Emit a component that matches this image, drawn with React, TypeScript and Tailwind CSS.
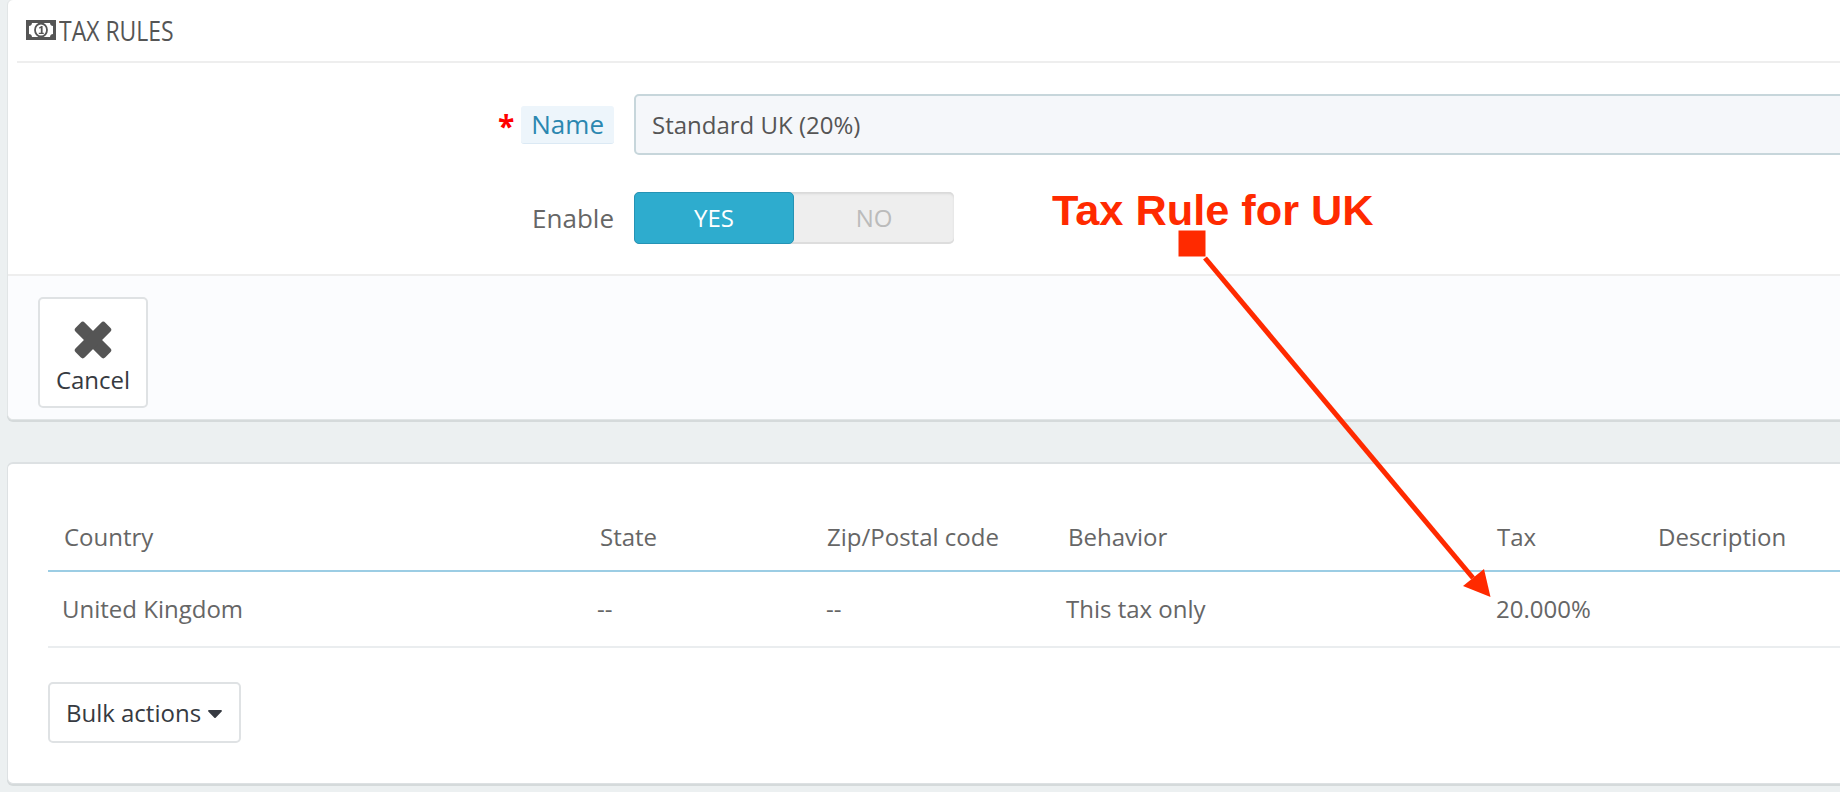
import { FaCaretDown } from "react-icons/fa";

const columns = [
  { label: "Country", cell: "United Kingdom", width: "w-[549px]", head: "pl-[16px]", body: "pl-[14px]" },
  { label: "State", cell: "--", width: "w-[229px]", head: "pl-[3px]", body: "pl-0" },
  { label: "Zip/Postal code", cell: "--", width: "w-[239px]", head: "pl-[1px]", body: "pl-0" },
  { label: "Behavior", cell: "This tax only", width: "w-[431px]", head: "pl-[3px]", body: "pl-[1px]" },
  { label: "Tax", cell: "20.000%", width: "w-[162px]", head: "pl-[1px]", body: "pl-0" },
  { label: "Description", cell: "", width: "w-[200px]", head: "pl-0", body: "pl-0" },
];

function MoneyIcon() {
  return (
    <svg width="30" height="20" viewBox="0 0 30 20" className="shrink-0">
      <path
        fillRule="evenodd"
        fill="#555555"
        d="M0 0h30v20H0z M6 3C6 5 4.500 6 3 6v8c1.500 0 3 1 3 3h18c0-2 1.500-3 3-3V6c-1.500 0-3-1-3-3z"
      />
      <ellipse cx="15" cy="10" rx="6" ry="6.500" fill="#ffffff" stroke="#555555" strokeWidth="1.800" />
      <path d="M13 7.500 15.300 6h1.300v6.800h1.200V14h-5v-1.200h2V8l-1.300 .7z" fill="#555555" />
    </svg>
  );
}

function CrossIcon() {
  return (
    <svg width="38" height="38" viewBox="0 0 38 38" className="shrink-0">
      <rect x="-2" y="12.500" width="42" height="13" rx="3" fill="#555555" transform="rotate(45 19 19)" />
      <rect x="-2" y="12.500" width="42" height="13" rx="3" fill="#555555" transform="rotate(-45 19 19)" />
    </svg>
  );
}

export default function App() {
  return (
    <div className="relative h-[792px] w-[1840px] overflow-hidden bg-[#ecf0f1] font-['Open_Sans',sans-serif] text-[#666666]">
      <section className="ml-[7px] mr-[-20px] mt-[-1px] rounded-[6px] border border-[#e1e5e6] bg-white shadow-[0_2px_0_#d5dadb]">
        <div className="mx-[9px] flex h-[63px] items-center gap-[3px] border-b-2 border-[#eeeeee] pl-[9px] pb-[1px] text-[#555555]">
          <MoneyIcon />
          <h2 className="origin-left scale-x-[0.82] text-[28px] leading-none whitespace-nowrap">TAX RULES</h2>
        </div>

        <div className="flex flex-col gap-[37px] pt-[31px] pb-[30px]">
          <div className="flex items-center">
            <div className="flex w-[606px] shrink-0 items-center justify-end gap-[7px]">
              <span className="pt-[3px] text-[30px] leading-none font-bold text-[#ff0000]">*</span>
              <label className="rounded-[3px] border-b border-[#dbe9f4] bg-[#edf5fb] px-[10px] py-[2px] text-[26px] leading-[33px] text-[#2b87b0]">
                Name
              </label>
            </div>
            <div className="ml-[20px] flex h-[61px] w-[1300px] shrink-0 items-center rounded-[5px] border-2 border-[#c7d6db] bg-[#f5f7fa] pl-[16px] text-[24px] text-[#555555]">
              Standard UK (20%)
            </div>
          </div>

          <div className="flex items-center">
            <label className="w-[606px] shrink-0 text-right text-[26px] text-[#666666]">Enable</label>
            <div className="ml-[20px] flex h-[52px] w-[320px] rounded-[5px] bg-[#eeeeee] shadow-[inset_0_2px_2px_#d8d8d8,inset_0_-2px_0_#dddddd]">
              <div className="flex h-full w-[160px] items-center justify-center rounded-[5px] border border-[#2593b5] bg-[#2eacce] text-[24px] text-white">
                YES
              </div>
              <div className="flex h-full w-[160px] items-center justify-center text-[24px] text-[#bbbbbb]">
                NO
              </div>
            </div>
          </div>
        </div>

        <div className="flex h-[145px] items-start rounded-b-[6px] border-t-2 border-[#eeeeee] bg-[#fbfcfe] pl-[30px] pt-[21px]">
          <button className="flex h-[111px] w-[110px] flex-col items-center rounded-[5px] border-2 border-[#dfe2e4] bg-white pt-[22px] text-[#363a41]">
            <CrossIcon />
            <span className="mt-[3px] text-[24px] leading-[36px]">Cancel</span>
          </button>
        </div>
      </section>

      <section className="ml-[7px] mr-[-20px] mt-[42px] h-[322px] rounded-[6px] border-t-2 border-r border-b border-l border-[#dde1e3] bg-white pl-[40px] pt-[45px] shadow-[0_2px_0_#d5dadb]">
        <table className="w-[1810px] table-fixed border-collapse">
          <thead>
            <tr className="h-[62px] border-b-2 border-[#9ccde4]">
              {columns.map((col) => (
                <th key={col.label} className={`${col.width} ${col.head} pb-[6px] text-left align-middle text-[24px] font-normal text-[#666666]`}>
                  {col.label}
                </th>
              ))}
            </tr>
          </thead>
          <tbody>
            <tr className="h-[76px] border-b-2 border-[#eaedef]">
              {columns.map((col) => (
                <td key={col.label} className={`${col.body} text-[24px] text-[#666666]`}>
                  {col.cell}
                </td>
              ))}
            </tr>
          </tbody>
        </table>

        <button className="mt-[34px] flex h-[61px] w-[193px] items-center justify-center gap-[6px] rounded-[5px] border-2 border-[#dfe2e4] bg-white text-[24px] text-[#363a41]">
          Bulk actions
          <FaCaretDown className="h-[24px] w-[16px] text-[#363a41]" />
        </button>
      </section>

      {/* annotation drawn over the page */}
      <p className="absolute top-[185px] left-[1052px] font-['Liberation_Sans',sans-serif] text-[43.300px] leading-[50px] font-bold whitespace-nowrap text-[#ff2a00]">
        Tax Rule for UK
      </p>
      <svg className="absolute inset-0" width="1840" height="792" viewBox="0 0 1840 792">
        <rect x="1178" y="230" width="28" height="27" fill="#ff2a00" stroke="#ffffff" strokeWidth="1" />
        <line x1="1205" y1="258" x2="1473" y2="578" stroke="#ff2a00" strokeWidth="5" />
        <polygon points="1490.500,597 1463,586 1484,569" fill="#ff2a00" />
      </svg>
    </div>
  );
}
